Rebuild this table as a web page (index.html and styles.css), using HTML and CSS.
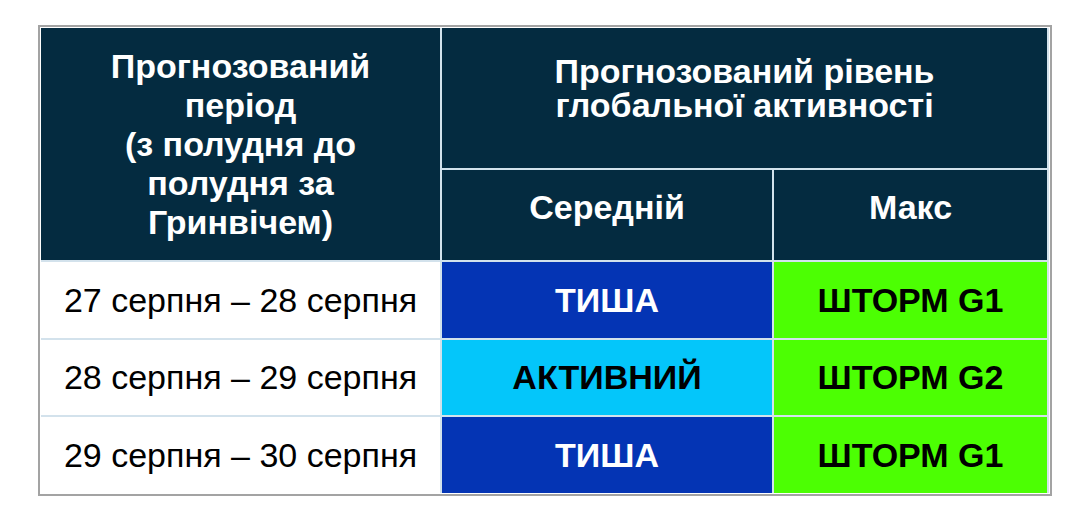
FILE: index.html
```html
<!DOCTYPE html>
<html lang="uk">
<head>
<meta charset="utf-8">
<title>Прогноз</title>
<link rel="stylesheet" href="styles.css">
</head>
<body>
<div class="frame">
  <div class="grid">
    <div class="cell head period">Прогнозований<br>період<br>(з полудня до<br>полудня за<br>Гринвічем)</div>
    <div class="cell head level">Прогнозований рівень<br>глобальної активності</div>
    <div class="cell head sub">Середній</div>
    <div class="cell head sub">Макс</div>

    <div class="cell date">27 серпня – 28 серпня</div>
    <div class="cell val quiet">ТИША</div>
    <div class="cell val storm">ШТОРМ G1</div>

    <div class="cell date">28 серпня – 29 серпня</div>
    <div class="cell val active">АКТИВНИЙ</div>
    <div class="cell val storm">ШТОРМ G2</div>

    <div class="cell date">29 серпня – 30 серпня</div>
    <div class="cell val quiet">ТИША</div>
    <div class="cell val storm">ШТОРМ G1</div>
  </div>
</div>
</body>
</html>
```
FILE: styles.css
```css
html, body {
  margin: 0;
  padding: 0;
  background: #ffffff;
}
body {
  font-family: "Liberation Sans", Arial, sans-serif;
}
.frame {
  margin: 25px 0 0 38px;
  width: 1008px;
  border: 2px solid #a3a3a3;
  padding: 1px;
  background: #ffffff;
}
.grid {
  display: grid;
  grid-template-columns: 399px 330px 273px;
  grid-template-rows: 140px 90px 76px 75px 76px;
  gap: 2px;
  background: #d3e2ec;
}
.cell {
  display: flex;
  align-items: center;
  justify-content: center;
  text-align: center;
}
.head {
  background: #042b40;
  color: #ffffff;
  font-weight: bold;
  font-size: 34px;
  line-height: 39px;
}
.period {
  grid-row: 1 / span 2;
}
.level {
  grid-column: 2 / span 2;
  line-height: 34px;
  padding-bottom: 20px;
}
.sub {
  padding-bottom: 16px;
}
.date {
  background: #ffffff;
  color: #000000;
  font-size: 34px;
}
.val {
  font-weight: bold;
  font-size: 34px;
}
.quiet {
  background: #0434b4;
  color: #ffffff;
}
.active {
  background: #04c6fa;
  color: #000000;
}
.storm {
  background: #4cff03;
  color: #000000;
}
```
